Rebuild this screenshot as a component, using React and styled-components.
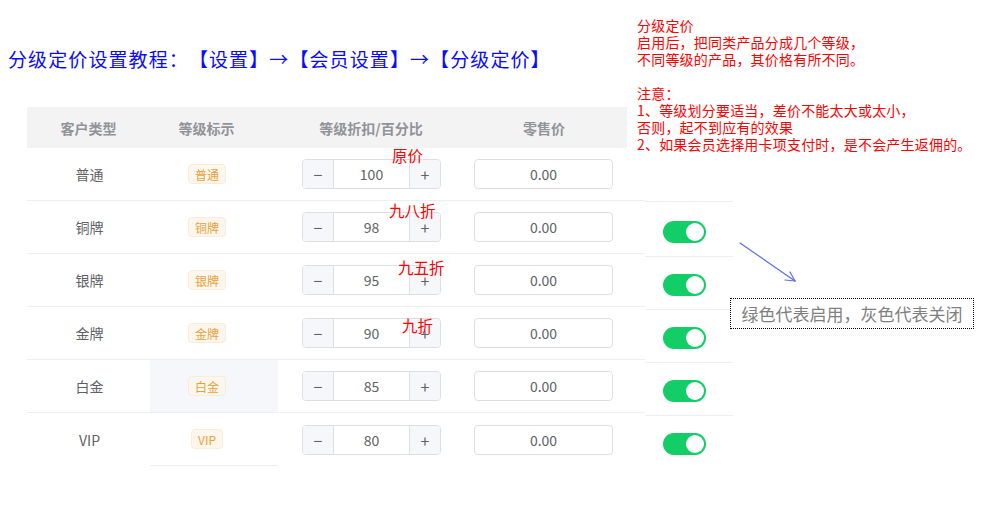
import React from 'react';
import styled, { createGlobalStyle } from 'styled-components';

const GlobalStyle = createGlobalStyle`
  html, body {
    margin: 0;
    padding: 0;
    background: #ffffff;
  }
  body {
    font-family: "Noto Sans CJK SC", "Noto Sans", sans-serif;
    text-spacing-trim: space-all;
  }
`;

const Page = styled.div`
  position: relative;
  width: 989px;
  height: 521px;
  overflow: hidden;
  background: #ffffff;
`;

const Title = styled.h1`
  margin: 0;
  padding: 47px 0 0 8px;
  height: 24px;
  font-size: 19px;
  line-height: 24px;
  font-weight: 400;
  letter-spacing: 1.1px;
  color: #0a0aff;
  white-space: nowrap;
`;

const Table = styled.div`
  display: grid;
  grid-template-columns: 123px 128px 177px 190px 88px;
  margin: 36px 0 0 27px;
  width: 706px;
`;

const HeadCell = styled.div`
  height: 41px;
  display: flex;
  align-items: center;
  justify-content: center;
  padding-left: ${(p) => p.$pl || 0}px;
  padding-right: ${(p) => p.$pr || 0}px;
  margin-right: ${(p) => p.$trim || 0}px;
  background: ${(p) => (p.$blank ? 'transparent' : '#f3f3f3')};
  color: #909399;
  font-size: 14px;
  font-weight: 700;
  box-sizing: border-box;
`;

const Cell = styled.div`
  height: 53px;
  display: flex;
  align-items: center;
  justify-content: ${(p) => (p.$start ? 'flex-start' : 'center')};
  padding-left: ${(p) => p.$pl || 0}px;
  padding-right: ${(p) => p.$pr || 0}px;
  border-bottom: ${(p) => (p.$noLine ? 'none' : '1px solid #ebeef5')};
  background: ${(p) => (p.$hover ? '#f5f7fa' : 'transparent')};
  color: #606266;
  font-size: 14px;
  box-sizing: border-box;
`;

const SwitchCell = styled.div`
  height: 53px;
  display: flex;
  align-items: flex-start;
  padding: 17px 0 0 18px;
  box-sizing: border-box;
  border-bottom: ${(p) => (p.$noLine ? 'none' : '1px solid #ebeef5')};
  transform: translateY(${(p) => (p.$first ? 1 : 3)}px);
`;

const Tag = styled.span`
  display: inline-flex;
  align-items: center;
  height: 20px;
  padding: 0 6px;
  border: 1px solid #faecd8;
  border-radius: 4px;
  background: #fdf6ec;
  color: #e6a23c;
  font-size: 12px;
  box-sizing: border-box;
`;

const Stepper = styled.div`
  display: flex;
  width: 139px;
  height: 30px;
  border: 1px solid #dcdfe6;
  border-radius: 4px;
  box-sizing: border-box;
  overflow: hidden;
  background: #ffffff;
`;

const StepBtn = styled.span`
  width: 30px;
  display: flex;
  align-items: center;
  justify-content: center;
  background: #f5f7fa;
  color: #606266;
  font-size: 16px;
  border-${(p) => (p.$side === 'left' ? 'right' : 'left')}: 1px solid #dcdfe6;
`;

const StepValue = styled.span`
  flex: 1;
  display: flex;
  align-items: center;
  justify-content: center;
  color: #606266;
  font-size: 14px;
`;

const PriceInput = styled.div`
  width: 139px;
  height: 30px;
  display: flex;
  align-items: center;
  justify-content: center;
  border: 1px solid #dcdfe6;
  border-radius: 4px;
  box-sizing: border-box;
  color: #606266;
  font-size: 14px;
`;

const Switch = styled.span`
  position: relative;
  display: inline-block;
  width: 43px;
  height: 22px;
  border-radius: 11px;
  background: ${(p) => (p.$on ? '#13ce66' : '#dcdfe6')};

  &::after {
    content: '';
    position: absolute;
    top: 2px;
    left: ${(p) => (p.$on ? '23px' : '2px')};
    width: 18px;
    height: 18px;
    border-radius: 50%;
    background: #ffffff;
  }
`;

const Notes = styled.div`
  position: absolute;
  left: 637px;
  top: 17px;
  color: #ff0000;
  font-size: 14px;
  line-height: 17px;
  letter-spacing: 0.2px;
  white-space: pre;
`;

const Mark = styled.span`
  position: absolute;
  left: ${(p) => p.$x}px;
  top: ${(p) => p.$y}px;
  color: #ff0000;
  font-size: 15.5px;
  line-height: 18px;
  white-space: nowrap;
`;

const Legend = styled.div`
  position: absolute;
  left: 730px;
  top: 298px;
  width: 244px;
  height: 31px;
  border: 1px dotted #000000;
  box-sizing: border-box;
  display: flex;
  align-items: center;
  justify-content: center;
  color: #808080;
  font-size: 17px;
`;

const Arrow = styled.svg`
  position: absolute;
  left: 738px;
  top: 240px;
`;

const levels = [
  { name: '普通', value: 100, toggle: false },
  { name: '铜牌', value: 98, toggle: true },
  { name: '银牌', value: 95, toggle: true },
  { name: '金牌', value: 90, toggle: true },
  { name: '白金', value: 85, toggle: true, hover: true },
  { name: 'VIP', value: 80, toggle: true },
];

const notes = `分级定价
启用后，把同类产品分成几个等级，
不同等级的产品，其价格有所不同。

注意：
1、等级划分要适当，差价不能太大或太小，
否则，起不到应有的效果
2、如果会员选择用卡项支付时，是不会产生返佣的。`;

export default function App() {
  return (
    <Page>
      <GlobalStyle />
      <Title>分级定价设置教程：【设置】→【会员设置】→【分级定价】</Title>

      <Table>
        <HeadCell>客户类型</HeadCell>
        <HeadCell $pr={15}>等级标示</HeadCell>
        <HeadCell $pl={9}>等级折扣/百分比</HeadCell>
        <HeadCell $pl={6} $trim={18}>零售价</HeadCell>
        <HeadCell $blank />

        {levels.map((lv, i) => {
          const last = i === levels.length - 1;
          return (
            <React.Fragment key={lv.name}>
              <Cell $pl={2} $noLine={last}>{lv.name}</Cell>
              <Cell $pr={14} $hover={lv.hover}>
                <Tag>{lv.name}</Tag>
              </Cell>
              <Cell $start $pl={24} $noLine={last}>
                <Stepper>
                  <StepBtn $side="left">−</StepBtn>
                  <StepValue>{lv.value}</StepValue>
                  <StepBtn $side="right">+</StepBtn>
                </Stepper>
              </Cell>
              <Cell $start $pl={19} $noLine={last}>
                <PriceInput>0.00</PriceInput>
              </Cell>
              <SwitchCell $noLine={last} $first={i === 0}>
                {lv.toggle && <Switch $on />}
              </SwitchCell>
            </React.Fragment>
          );
        })}
      </Table>

      <Mark $x={392} $y={146}>原价</Mark>
      <Mark $x={389} $y={201}>九八折</Mark>
      <Mark $x={398} $y={258}>九五折</Mark>
      <Mark $x={402} $y={316}>九折</Mark>

      <Notes>{notes}</Notes>

      <Arrow width="62" height="46" viewBox="0 0 62 46">
        <g stroke="#5b6cf0" strokeWidth="1.2" fill="none" strokeLinecap="round">
          <line x1="2" y1="3" x2="57" y2="41" />
          <line x1="52" y1="32" x2="57" y2="41" />
          <line x1="47" y1="40" x2="57" y2="41" />
        </g>
      </Arrow>

      <Legend>绿色代表启用，灰色代表关闭</Legend>
    </Page>
  );
}
